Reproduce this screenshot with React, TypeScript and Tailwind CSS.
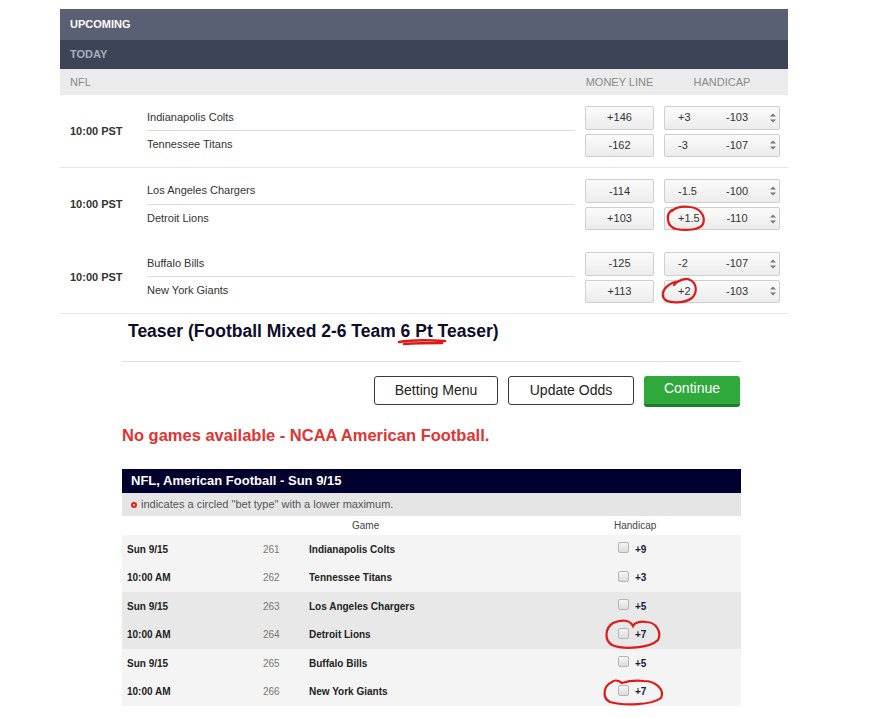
const games = [
  { teams: [["Indianapolis Colts", "+146", "+3", "-103"], ["Tennessee Titans", "-162", "-3", "-107"]], border: true },
  { teams: [["Los Angeles Chargers", "-114", "-1.5", "-100"], ["Detroit Lions", "+103", "+1.5", "-110"]], border: false },
  { teams: [["Buffalo Bills", "-125", "-2", "-107"], ["New York Giants", "+113", "+2", "-103"]], border: true },
];

const teaserRows = [
  { bg: "bg-[#f4f4f4]", rows: [["Sun 9/15", "261", "Indianapolis Colts", "+9"], ["10:00 AM", "262", "Tennessee Titans", "+3"]] },
  { bg: "bg-[#e8e8e8]", rows: [["Sun 9/15", "263", "Los Angeles Chargers", "+5"], ["10:00 AM", "264", "Detroit Lions", "+7"]] },
  { bg: "bg-[#f4f4f4]", rows: [["Sun 9/15", "265", "Buffalo Bills", "+5"], ["10:00 AM", "266", "New York Giants", "+7"]] },
];

function Spinner() {
  return (
    <svg width="8" height="12" viewBox="0 0 8 12" className="text-[#777]">
      <path d="M1 4.5 L4 1.5 L7 4.5 Z" fill="currentColor" />
      <path d="M1 7.5 L4 10.5 L7 7.5 Z" fill="currentColor" />
    </svg>
  );
}

function OddsBox({ children, tall }: { children: React.ReactNode; tall?: boolean }) {
  return (
    <div
      className={`flex items-center rounded-[2px] border border-[#cfcfcf] bg-gradient-to-b from-[#fbfbfb] to-[#ececec] ${tall ? "h-[24px]" : "h-[23px]"}`}
    >
      {children}
    </div>
  );
}

export default function App() {
  return (
    <div className="relative h-[718px] w-[886px] overflow-hidden bg-white font-['Liberation_Sans',Arial,sans-serif] text-[#333]">
      <div className="ml-[60px] mt-[9px] w-[728px]">
        <div className="flex h-[31px] items-center bg-[#5a6074] pl-[10px] text-[11px] font-bold text-white">UPCOMING</div>
        <div className="flex h-[29px] items-center bg-[#3c4457] pl-[10px] text-[11px] font-bold text-[#a9aebb]">TODAY</div>
        <div className="flex h-[26px] items-center bg-[#ebebeb] pl-[10px] pr-[8px] text-[11px] text-[#8a8a8a]">
          <div className="flex-1">NFL</div>
          <div className="w-[69px] text-center">MONEY LINE</div>
          <div className="ml-[10px] w-[116px] text-center">HANDICAP</div>
        </div>

        {games.map((g, gi) => (
          <div
            key={gi}
            className={`flex h-[73px] items-center pl-[10px] pr-[8px] ${g.border ? "border-b border-[#e6e6e6]" : ""}`}
          >
            <div className="w-[77px] text-[11px] font-bold text-[#333]">10:00 PST</div>
            <div className="mr-[10px] flex flex-1 flex-col">
              {g.teams.map((t, ti) => (
                <div
                  key={ti}
                  className={`flex h-[27px] items-center text-[11px] text-[#333] ${ti === 0 ? "border-b border-[#dcdcdc]" : ""}`}
                >
                  {t[0]}
                </div>
              ))}
            </div>
            <div className="flex flex-col gap-[4px]">
              {g.teams.map((t, ti) => (
                <div key={ti} className="flex gap-[10px]">
                  <div className="w-[69px]">
                    <OddsBox tall={ti === 0}>
                      <span className="w-full text-center text-[11px]">{t[1]}</span>
                    </OddsBox>
                  </div>
                  <div className="w-[116px]">
                    <OddsBox tall={ti === 0}>
                      <span className="w-[42px] pl-[13px] text-[11px]">{t[2]}</span>
                      <span className="w-[60px] text-center text-[11px]">{t[3]}</span>
                      <span className="ml-[2px] flex items-center"><Spinner /></span>
                    </OddsBox>
                  </div>
                </div>
              ))}
            </div>
          </div>
        ))}
      </div>

      <div className="ml-[122px] w-[619px]">
        <div className="h-[48px] border-b border-[#dedede] pl-[6px] pt-[7px] text-[17.5px] leading-[20px] font-bold text-[#0d0d2b]">
          Teaser (Football Mixed 2-6 Team 6 Pt Teaser)
        </div>
        <div className="mt-[14px] flex justify-end gap-[10px] pr-[1px]">
          <button className="h-[29px] w-[124px] rounded-[3px] border border-[#3a3a3a] bg-white text-[14px] text-[#222]">Betting Menu</button>
          <button className="h-[29px] w-[126px] rounded-[3px] border border-[#3a3a3a] bg-white text-[14px] text-[#222]">Update Odds</button>
          <button className="h-[31px] w-[96px] rounded-[3px] border-b-[3px] border-[#1e7d2a] bg-[#2fa83c] pb-[4px] text-[14px] text-white">Continue</button>
        </div>
        <div className="mt-[18px] text-[16.5px] leading-[20px] font-bold text-[#e23333]">No games available - NCAA American Football.</div>

        <div className="mt-[24px]">
          <div className="flex h-[24px] items-center bg-[#00002e] pl-[9px] text-[13px] font-bold text-white">NFL, American Football - Sun 9/15</div>
          <div className="flex h-[23px] items-center gap-[4px] bg-[#e5e5e5] pl-[9px] text-[11px] text-[#555]">
            <span className="inline-block h-[6px] w-[6px] rounded-full border-[2px] border-[#e02020]" />
            indicates a circled "bet type" with a lower maximum.
          </div>
          <div className="flex h-[19px] items-center bg-white text-[10px] text-[#444]">
            <div className="w-[496px] pl-[230px]">Game</div>
            <div className="ml-[-4px]">Handicap</div>
          </div>
          {teaserRows.map((grp, gi) => (
            <div key={gi} className={grp.bg}>
              {grp.rows.map((r, ri) => (
                <div key={ri} className="flex h-[28.5px] items-center text-[10px]">
                  <div className="w-[141px] pl-[5px] font-bold text-[#222]">{r[0]}</div>
                  <div className="w-[46px] text-[#777]">{r[1]}</div>
                  <div className="w-[309px] font-bold text-[#222]">{r[2]}</div>
                  <div className="flex items-center gap-[6px]">
                    <span className="mt-[-3px] inline-block h-[11px] w-[11px] rounded-[2px] border border-[#b5b5b5] bg-gradient-to-b from-[#f5f5f5] to-[#dcdcdc]" />
                    <span className="font-bold text-[#1a1a40]">{r[3]}</span>
                  </div>
                </div>
              ))}
            </div>
          ))}
        </div>
      </div>

      <svg className="pointer-events-none absolute inset-0" width="886" height="718" viewBox="0 0 886 718" fill="none" stroke="#e01818" strokeWidth="2.2" strokeLinecap="round">
        <path d="M672 210 C666 214 666 226 676 229 C686 231 700 230 703 224 C706 216 700 208 690 207 C682 206 675 208 672 211" />
        <path d="M680 281 C670 282 661 289 663 297 C666 304 684 304 692 298 C698 292 697 282 688 279 C683 278 676 282 674 285" />
        <path d="M399 342 C410 340 430 340 445 341 M404 344 C418 343 432 343 442 343" strokeWidth="2.6" />
        <path d="M613 623 C605 628 604 640 612 645 C624 650 650 648 658 640 C662 632 656 622 646 622 C640 621 634 623 633 626 C630 620 622 619 613 623" />
        <path d="M612 682 C603 686 602 698 610 702 C624 706 652 705 661 698 C665 690 656 681 644 681 C636 680 628 681 622 683 C618 680 614 680 612 682" />
      </svg>
    </div>
  );
}
